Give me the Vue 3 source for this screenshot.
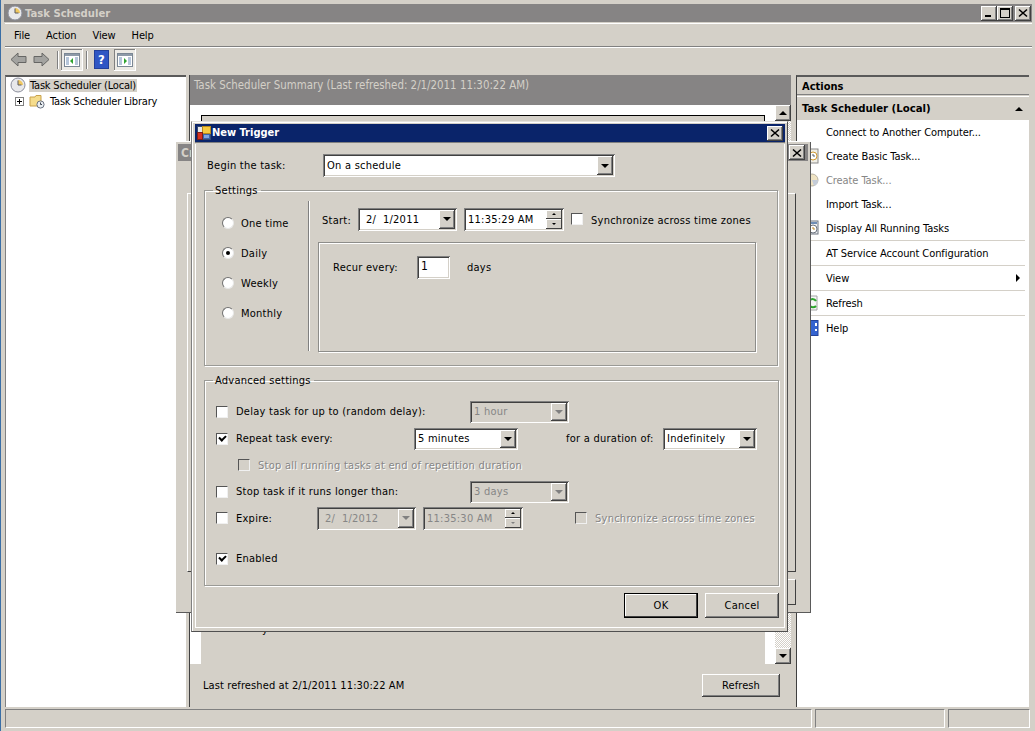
<template>
  <div class="desktop">
    <!-- main mmc window -->
    <div class="main-win">
      <div class="title-bar inactive">
        <svg class="ico16" viewBox="0 0 16 16">
          <circle cx="8" cy="8" r="7" fill="#e8e8ea" stroke="#8c8f9c" />
          <path d="M8 8V3A5 5 0 0 1 13 8Z" fill="#f0c860" />
          <path d="M8 3.5V8H11.5" fill="none" stroke="#5a5a60" stroke-width="1" />
        </svg>
        <span class="title-text">Task Scheduler</span>
        <div class="win-btns">
          <button class="cap-btn"><span class="min-glyph"></span></button>
          <button class="cap-btn"><span class="max-glyph"></span></button>
          <button class="cap-btn x-btn">
            <svg viewBox="0 0 10 10" width="10" height="10"><path d="M1 1.5L9 8.5M9 1.5L1 8.5" stroke="#000" stroke-width="1.6" /></svg>
          </button>
        </div>
      </div>

      <div class="menu-bar">
        <span v-for="m in menus" :key="m" class="menu-item">{{ m }}</span>
      </div>

      <div class="tool-bar">
        <svg class="tool-arrow" viewBox="0 0 17 15" width="17" height="15"><path d="M1 7.5L8 1V4.5H16V10.5H8V14Z" fill="#a3a3a0" stroke="#666664" /></svg>
        <svg class="tool-arrow second" viewBox="0 0 17 15" width="17" height="15"><path d="M16 7.5L9 1V4.5H1V10.5H9V14Z" fill="#a3a3a0" stroke="#666664" /></svg>
        <span class="tool-sep"></span>
        <span class="tool-toggle">
          <svg viewBox="0 0 16 14" width="16" height="14">
            <rect x="0.5" y="0.5" width="15" height="13" fill="#fff" stroke="#7b8794" />
            <rect x="1" y="1" width="14" height="2" fill="#8e9aa8" />
            <path d="M2 5H5M2 7H5M2 9H5M2 11H5M11 5H14M11 7H14M11 9H14M11 11H14" stroke="#6f8db5" />
            <path d="M9 5L6 8L9 11Z" fill="#2fa32f" />
          </svg>
        </span>
        <span class="tool-sep small"></span>
        <span class="help-ico">?</span>
        <span class="tool-toggle near">
          <svg viewBox="0 0 16 14" width="16" height="14">
            <rect x="0.5" y="0.5" width="15" height="13" fill="#fff" stroke="#7b8794" />
            <rect x="1" y="1" width="14" height="2" fill="#8e9aa8" />
            <path d="M2 5H5M2 7H5M2 9H5M2 11H5M11 5H14M11 7H14M11 9H14M11 11H14" stroke="#6f8db5" />
            <path d="M7 5L10 8L7 11Z" fill="#2fa32f" />
          </svg>
        </span>
      </div>

      <div class="panes">
        <div class="tree-pane">
          <div class="tree-row">
            <svg class="ico16" viewBox="0 0 16 16">
              <circle cx="8" cy="8" r="7" fill="#e8e8ea" stroke="#8c8f9c" />
              <path d="M8 8V3A5 5 0 0 1 13 8Z" fill="#f0c860" />
              <path d="M8 3.5V8H11.5" fill="none" stroke="#5a5a60" />
            </svg>
            <span class="tree-sel">Task Scheduler (Local)</span>
          </div>
          <div class="tree-row child">
            <span class="plus-box"></span>
            <svg class="ico16 folder" viewBox="0 0 16 16">
              <path d="M1 4H6L7 2.5H12V13H1Z" fill="#f5dc8c" stroke="#c9a24c" />
              <circle cx="11.5" cy="11.5" r="3.6" fill="#e9eef2" stroke="#6b7280" />
              <path d="M11.5 9.5V11.5H13" fill="none" stroke="#3d4450" />
            </svg>
            <span>Task Scheduler Library</span>
          </div>
        </div>

        <div class="center-pane">
          <div class="summary-head">Task Scheduler Summary (Last refreshed: 2/1/2011 11:30:22 AM)</div>
          <div class="summary-body">
            <div class="summary-box">
              <div class="summary-inner"></div>
              <!-- descender of a line hidden under the dialog -->
              <span class="stray">y</span>
            </div>
            <div class="scroll-col">
              <button class="scroll-btn"><span class="tri up"></span></button>
              <div class="scroll-track"></div>
              <button class="scroll-btn"><span class="tri"></span></button>
            </div>
          </div>
          <div class="summary-foot">
            <span>Last refreshed at 2/1/2011 11:30:22 AM</span>
            <button class="btn refresh">Refresh</button>
          </div>
        </div>

        <div class="actions-pane">
          <div class="actions-head">Actions</div>
          <div class="actions-sub">
            <span>Task Scheduler (Local)</span>
            <span class="tri up"></span>
          </div>
          <div class="actions-list">
            <div v-for="a in actions" :key="a.label" class="action" :class="{ ruled: a.ruled, off: a.off }" :style="{ height: a.h + 'px' }">
              <svg v-if="a.icon === 'task'" class="act-ico" viewBox="0 0 16 16">
                <rect x="4" y="1" width="11" height="14" fill="#f1efe6" stroke="#8a8a8a" />
                <circle cx="10" cy="8" r="4" fill="#fff" stroke="#d19b35" />
                <path d="M10 6V8H12" fill="none" stroke="#55606e" />
              </svg>
              <svg v-if="a.icon === 'taskoff'" class="act-ico" viewBox="0 0 16 16">
                <circle cx="9" cy="8" r="6" fill="#efe3c3" stroke="#b9b2a3" />
                <path d="M9 8L15 8A6 6 0 0 1 11 14Z" fill="#c4ccd8" />
              </svg>
              <svg v-if="a.icon === 'list'" class="act-ico" viewBox="0 0 16 16">
                <rect x="4" y="1" width="11" height="13" fill="#eef0f2" stroke="#6c7480" />
                <path d="M5 3H14" stroke="#6f8db5" stroke-width="2" />
                <circle cx="10" cy="9" r="4" fill="#fff" stroke="#6c7480" />
                <path d="M10 7V9H12" fill="none" stroke="#c08a2a" />
              </svg>
              <svg v-if="a.icon === 'refresh'" class="act-ico" viewBox="0 0 16 16">
                <path d="M4 1H14V15H4Z" fill="#f6f6f6" stroke="#a4a4a4" />
                <path d="M13 6A4 4 0 0 0 6 6M7 11A4 4 0 0 0 13 11" fill="none" stroke="#2da52d" stroke-width="2" />
              </svg>
              <svg v-if="a.icon === 'help'" class="act-ico" viewBox="0 0 16 16">
                <rect x="4" y="0.5" width="11" height="15" fill="#3563cf" stroke="#24439a" />
                <path d="M12 3H14V6H12ZM12 9H14V11H12Z" fill="#fff" />
              </svg>
              <span class="action-label">{{ a.label }}</span>
              <span v-if="a.more" class="more"></span>
            </div>
          </div>
        </div>
      </div>

      <div class="status-bar">
        <span class="st wide"></span>
        <span class="st mid"></span>
        <span class="st end"></span>
      </div>
    </div>

    <!-- dialog behind the trigger dialog -->
    <div class="back-dlg">
      <div class="back-title">
        <span class="back-cap">Create Trigger</span>
        <button class="cap-btn dlg-x">
          <svg viewBox="0 0 10 10" width="10" height="10"><path d="M1 1.5L9 8.5M9 1.5L1 8.5" stroke="#000" stroke-width="1.6" /></svg>
        </button>
      </div>
      <div class="back-group"></div>
      <div class="back-strip"></div>
    </div>

    <!-- New Trigger dialog -->
    <div class="dlg">
      <div class="dlg-title">
        <svg class="dlg-ico" viewBox="0 0 14 14">
          <rect x="0.5" y="0.5" width="13" height="13" fill="#e8e8e8" stroke="#34496f" />
          <rect x="5.5" y="0.5" width="8" height="7" fill="#f6c93e" stroke="#b88a1c" />
          <rect x="0.5" y="6.5" width="5" height="7" fill="#d8301f" stroke="#7d1e16" />
          <rect x="6.5" y="8.5" width="6" height="4" fill="#7ea6e0" stroke="#3d63a8" />
        </svg>
        <span class="dlg-name">New Trigger</span>
        <button class="cap-btn dlg-x">
          <svg viewBox="0 0 10 10" width="10" height="10"><path d="M1 1.5L9 8.5M9 1.5L1 8.5" stroke="#000" stroke-width="1.6" /></svg>
        </button>
      </div>

      <div class="dlg-body">
        <div class="begin-row">
          <span class="begin-label">Begin the task:</span>
          <div class="combo begin-combo">
            <span class="combo-val">On a schedule</span>
            <span class="drop"><span class="tri"></span></span>
          </div>
        </div>

        <fieldset class="group settings">
          <legend>Settings</legend>
          <div class="settings-in">
            <div class="radios">
              <label v-for="r in schedules" :key="r" class="radio-row">
                <span class="radio" :class="{ on: r === 'Daily' }"></span>
                <span>{{ r }}</span>
              </label>
            </div>
            <div class="schedule">
              <div class="start-row">
                <span class="start-label">Start:</span>
                <div class="combo date">
                  <span class="combo-val wide-date">2/&nbsp;&nbsp;1/2011</span>
                  <span class="drop"><span class="tri"></span></span>
                </div>
                <div class="combo time">
                  <span class="combo-val">11:35:29 AM</span>
                  <span class="spin"><i><b class="tri tiny up"></b></i><i><b class="tri tiny"></b></i></span>
                </div>
                <span class="check sync-check"></span>
                <span class="sync-label">Synchronize across time zones</span>
              </div>
              <div class="recur-box">
                <span class="recur-label">Recur every:</span>
                <span class="recur-input">1</span>
                <span class="recur-unit">days</span>
              </div>
            </div>
          </div>
        </fieldset>

        <fieldset class="group advanced">
          <legend>Advanced settings</legend>
          <div class="adv-row">
            <span class="check"></span>
            <span class="adv-label l-delay">Delay task for up to (random delay):</span>
            <div class="combo off c-long">
              <span class="combo-val">1 hour</span>
              <span class="drop"><span class="tri"></span></span>
            </div>
          </div>
          <div class="adv-row">
            <span class="check on"></span>
            <span class="adv-label l-repeat">Repeat task every:</span>
            <div class="combo c-repeat">
              <span class="combo-val">5 minutes</span>
              <span class="drop"><span class="tri"></span></span>
            </div>
            <span class="dur-label">for a duration of:</span>
            <div class="combo c-dur">
              <span class="combo-val">Indefinitely</span>
              <span class="drop"><span class="tri"></span></span>
            </div>
          </div>
          <div class="adv-row short indent">
            <span class="check dim"></span>
            <span class="adv-label gray">Stop all running tasks at end of repetition duration</span>
          </div>
          <div class="adv-row">
            <span class="check"></span>
            <span class="adv-label l-delay">Stop task if it runs longer than:</span>
            <div class="combo off c-long">
              <span class="combo-val">3 days</span>
              <span class="drop"><span class="tri"></span></span>
            </div>
          </div>
          <div class="adv-row short">
            <span class="check"></span>
            <span class="adv-label l-expire">Expire:</span>
            <div class="combo off date">
              <span class="combo-val wide-date">2/&nbsp;&nbsp;1/2012</span>
              <span class="drop"><span class="tri"></span></span>
            </div>
            <div class="combo off time">
              <span class="combo-val">11:35:30 AM</span>
              <span class="spin"><i><b class="tri tiny up"></b></i><i><b class="tri tiny"></b></i></span>
            </div>
            <span class="check dim exp-sync"></span>
            <span class="gray">Synchronize across time zones</span>
          </div>
          <div class="adv-row enabled">
            <span class="check on"></span>
            <span class="adv-label">Enabled</span>
          </div>
        </fieldset>

        <div class="dlg-foot">
          <button class="btn ok">OK</button>
          <button class="btn cancel">Cancel</button>
        </div>
      </div>
    </div>
  </div>
</template>

<script setup>
const menus = ['File', 'Action', 'View', 'Help']
const schedules = ['One time', 'Daily', 'Weekly', 'Monthly']

// rows of the Actions pane, heights read from the screenshot
const actions = [
  { label: 'Connect to Another Computer...', h: 24 },
  { label: 'Create Basic Task...', h: 24, icon: 'task' },
  { label: 'Create Task...', h: 24, icon: 'taskoff', off: true },
  { label: 'Import Task...', h: 24 },
  { label: 'Display All Running Tasks', h: 25, icon: 'list', ruled: true },
  { label: 'AT Service Account Configuration', h: 25, ruled: true },
  { label: 'View', h: 25, ruled: true, more: true },
  { label: 'Refresh', h: 25, icon: 'refresh', ruled: true },
  { label: 'Help', h: 25, icon: 'help' }
]
</script>

<style>
html, body {
  margin: 0;
  background: #d4d0c8;
}
</style>

<style scoped>
.desktop {
  position: relative;
  width: 1035px;
  height: 731px;
  overflow: hidden;
  background: #d4d0c8;
  font-family: "DejaVu Sans Condensed", "DejaVu Sans", sans-serif;
  font-stretch: condensed;
  font-size: 11px;
  color: #000;
}

/* main window */
.main-win {
  display: flex;
  flex-direction: column;
  height: 731px;
  box-sizing: border-box;
  padding: 4px 3px 2px 4px;
  border-left: 1px solid #3a6ea5;
}
.title-bar {
  display: flex;
  align-items: center;
  flex: none;
  height: 18px;
  margin-left: -1px;
  padding-left: 3px;
  background: #868484;
  color: #d4d0c8;
  font-size: 11.2px;
  font-weight: bold;
}
.title-text {
  margin-left: 2px;
}
.ico16 {
  width: 16px;
  height: 16px;
  flex: none;
}
.win-btns {
  display: flex;
  margin-left: auto;
  margin-right: 1px;
}
.cap-btn {
  display: flex;
  align-items: center;
  justify-content: center;
  width: 16px;
  height: 15px;
  padding: 0;
  border: 0;
  margin-left: 0;
  background: #d4d0c8;
  box-shadow: inset -1px -1px #404040, inset 1px 1px #fff, inset -2px -2px #808080;
}
.x-btn {
  margin-left: 2px;
}
.min-glyph {
  width: 6px;
  height: 2px;
  background: #000;
  margin-top: 6px;
  margin-right: 3px;
}
.max-glyph {
  width: 8px;
  height: 7px;
  border: 1px solid #000;
  border-top-width: 2px;
}
.menu-bar {
  display: flex;
  flex: none;
  align-items: center;
  height: 24px;
  margin-top: 1px;
  padding-left: 9px;
  gap: 16px;
  letter-spacing: -0.1px;
  border-top: 1px solid #fff;
  border-bottom: 1px solid #808080;
  box-sizing: border-box;
}
.tool-bar {
  display: flex;
  flex: none;
  align-items: center;
  height: 24px;
  padding-left: 5px;
  border-top: 1px solid #fff;
  box-sizing: border-box;
}
.tool-arrow.second {
  margin-left: 6px;
}
.tool-sep {
  width: 1px;
  height: 18px;
  margin: 0 3px 0 7px;
  background: #808080;
  box-shadow: 1px 0 #fff;
}
.tool-sep.small {
  margin: 0 8px 0 3px;
}
.tool-toggle {
  display: flex;
  align-items: center;
  justify-content: center;
  width: 22px;
  height: 22px;
  background: #eceae5;
  box-shadow: inset -1px -1px #fff, inset 1px 1px #808080;
}
.tool-toggle.near {
  margin-left: 6px;
}
.help-ico {
  width: 13px;
  height: 17px;
  background: #2f56c4;
  color: #fff;
  font-weight: bold;
  font-size: 13px;
  line-height: 17px;
  text-align: center;
  box-shadow: 0 0 0 1px #23409a;
}

.panes {
  display: flex;
  flex: 1;
  min-height: 0;
  margin-top: 4px;
  background: #d4d0c8;
}
.tree-pane {
  width: 181px;
  flex: none;
  box-sizing: border-box;
  padding: 0 0 0 4px;
  background: #fff;
  border-top: 2px solid #5a5a5a;
  border-left: 1px solid #808080;
  letter-spacing: -0.2px;
}
.tree-row {
  display: flex;
  align-items: center;
  height: 16px;
}
.tree-sel {
  margin-left: 3px;
  padding: 0 1px;
  background: #d4d0c8;
}
.tree-row.child {
  margin-left: 5px;
}
.plus-box {
  position: relative;
  box-sizing: border-box;
  width: 9px;
  height: 9px;
  border: 1px solid #808080;
  margin-right: 5px;
}
.plus-box::before {
  content: "";
  position: absolute;
  left: 1px;
  top: 3px;
  width: 5px;
  height: 1px;
  background: #000;
}
.plus-box::after {
  content: "";
  position: absolute;
  left: 3px;
  top: 1px;
  width: 1px;
  height: 5px;
  background: #000;
}
.folder {
  margin-right: 5px;
}
.center-pane {
  display: flex;
  flex-direction: column;
  width: 602px;
  flex: none;
  margin-left: 3px;
  border-left: 1px solid #404040;
  box-sizing: border-box;
}
.summary-head {
  flex: none;
  box-sizing: border-box;
  height: 30px;
  padding: 3px 0 0 4px;
  background: #868484;
  color: #d4d0c8;
  font-size: 11.4px;
}
.summary-body {
  display: flex;
  height: 559px;
  flex: none;
  background: #fff;
  box-sizing: border-box;
  padding: 10px 0 0 11px;
}
.summary-box {
  position: relative;
  flex: 1;
  margin-right: 10px;
  background: #d4d0c8;
}
.summary-inner {
  box-sizing: border-box;
  height: 60px;
  border: 1px solid #000;
  border-bottom: 0;
}
.stray {
  position: absolute;
  left: 61px;
  top: 508px;
}
.scroll-col {
  display: flex;
  flex-direction: column;
  width: 16px;
  flex: none;
  margin-top: -10px;
}
.scroll-btn {
  display: flex;
  align-items: center;
  justify-content: center;
  width: 16px;
  height: 16px;
  padding: 0;
  border: 0;
  background: #d4d0c8;
  box-shadow: inset -1px -1px #404040, inset 1px 1px #fff, inset -2px -2px #808080;
}
.scroll-track {
  flex: 1;
  background: repeating-conic-gradient(#d4d0c8 0 25%, #fff 0 50%) 0 0 / 2px 2px;
}
.summary-foot {
  display: flex;
  align-items: center;
  flex: 1;
  justify-content: space-between;
  padding: 0 11px 0 13px;
  letter-spacing: 0.1px;
}
.actions-pane {
  display: flex;
  flex-direction: column;
  width: 233px;
  flex: none;
  margin-left: 5px;
  border-left: 1px solid #404040;
  border-top: 2px solid #5a5a5a;
  box-sizing: border-box;
}
.actions-head {
  flex: none;
  box-sizing: border-box;
  height: 18px;
  padding: 3px 0 0 5px;
  font-weight: bold;
  border-bottom: 1px solid #808080;
  margin-bottom: 1px;
}
.actions-sub {
  display: flex;
  align-items: center;
  justify-content: space-between;
  flex: none;
  height: 24px;
  padding: 0 6px 0 5px;
  font-size: 11.3px;
  font-weight: bold;
  background: #d4d0c8;
  border-top: 1px solid #fff;
  box-sizing: border-box;
}
.actions-list {
  flex: 1;
  background: #fff;
  padding-right: 4px;
  letter-spacing: -0.08px;
}
.action {
  position: relative;
  display: flex;
  align-items: center;
  box-sizing: border-box;
  padding-left: 29px;
}
.action.ruled {
  border-bottom: 1px solid #d4d0c8;
}
.action.off {
  color: #868686;
}
.act-ico {
  position: absolute;
  left: 6px;
  top: 4px;
  width: 16px;
  height: 16px;
}
.more {
  position: absolute;
  right: 5px;
  top: 8px;
  border-left: 4px solid #000;
  border-top: 4px solid transparent;
  border-bottom: 4px solid transparent;
}
.status-bar {
  display: flex;
  flex: none;
  height: 20px;
  margin-top: 2px;
  gap: 3px;
  box-sizing: border-box;
}
.st {
  display: block;
  height: 19px;
  box-sizing: border-box;
  border: 1px solid;
  border-color: #808080 #fff #fff #808080;
}
.st.wide { width: 807px; }
.st.mid { width: 130px; }
.st.end { width: 82px; }

/* triangles */
.tri {
  display: block;
  width: 0;
  height: 0;
  border-left: 4px solid transparent;
  border-right: 4px solid transparent;
  border-top: 4px solid #000;
}
.tri.up {
  border-top: 0;
  border-bottom: 4px solid #000;
}
.tri.tiny {
  border-left-width: 2px;
  border-right-width: 2px;
  border-top-width: 2px;
}
.tri.tiny.up {
  border-top-width: 0;
  border-bottom-width: 2px;
}

/* windows on top of the console */
.back-dlg {
  position: absolute;
  left: 175px;
  top: 141px;
  width: 636px;
  height: 472px;
  box-sizing: border-box;
  padding: 3px;
  background: #d4d0c8;
  box-shadow: inset 1px 1px #fff, inset -1px -1px #5a5a5a;
}
.back-title {
  display: flex;
  align-items: center;
  justify-content: space-between;
  height: 17px;
  background: #868484;
  color: #d4d0c8;
  font-weight: bold;
  padding-left: 3px;
  padding-right: 3px;
  font-size: 12px;
}
.back-group {
  height: 377px;
  margin: 32px 12px 0 9px;
  border: 1px solid;
  border-color: #fff #404040 #404040 #fff;
}
.back-strip {
  height: 24px;
  margin: 7px 12px 0 560px;
  border: 1px solid;
  border-color: #fff #404040 #404040 #fff;
}
.dlg {
  position: absolute;
  left: 191px;
  top: 121px;
  width: 597px;
  height: 511px;
  box-sizing: border-box;
  padding: 2px 2px 3px 3px;
  background: #d4d0c8;
  border: 1px solid;
  border-color: #e6e4de #505050 #505050 #808080;
  box-shadow: inset 1px 1px #fff, inset -1px -1px #d4d0c8;
  display: flex;
  flex-direction: column;
}
.dlg-title {
  display: flex;
  align-items: center;
  flex: none;
  height: 18px;
  padding: 0 2px 0 2px;
  background: #0a246a;
  color: #fff;
  font-size: 11px;
  font-weight: bold;
  border-bottom: 1px solid #808080;
  margin-bottom: 1px;
}
.dlg-name {
  margin-top: -2px;
}
.dlg-ico {
  width: 14px;
  height: 14px;
  margin-right: 1px;
}
.dlg-x {
  margin-left: auto;
  background: #d4d0c8;
}
.dlg-body {
  flex: 1;
  box-sizing: border-box;
  padding: 10px 5px 0 8px;
  border-left: 1px solid #fff;
  border-right: 1px solid #fff;
  border-bottom: 1px solid #fff;
  min-height: 0;
  letter-spacing: 0.25px;
}
.begin-row {
  display: flex;
  align-items: center;
  height: 23px;
  margin-bottom: 7px;
}
.begin-label {
  width: 119px;
  padding-left: 3px;
  box-sizing: border-box;
}
.combo {
  display: flex;
  align-items: stretch;
  flex: none;
  box-sizing: border-box;
  height: 22px;
  padding: 2px;
  background: #fff;
  box-shadow: inset 1px 1px #808080, inset -1px -1px #fff, inset 2px 2px #404040, inset -2px -2px #d4d0c8;
}
.combo-val {
  flex: 1;
  padding: 2px 0 0 2px;
  line-height: 13px;
  white-space: nowrap;
  overflow: hidden;
}
.date .combo-val,
.time .combo-val {
  padding-top: 3px;
}
.wide-date {
  padding-left: 6px;
}
.drop {
  display: flex;
  align-items: center;
  justify-content: center;
  flex: none;
  width: 16px;
  background: #d4d0c8;
  box-shadow: inset -1px -1px #404040, inset 1px 1px #fff, inset -2px -2px #808080;
}
.begin-combo {
  width: 292px;
  height: 23px;
}
.begin-combo .combo-val {
  padding-top: 3px;
}
.combo.off {
  background: #d4d0c8;
  color: #868686;
}
.combo.off .tri {
  border-top-color: #808080;
}
.group {
  margin: 0;
  padding: 0;
  border: 1px solid #9a9a96;
  box-shadow: 1px 1px #fff, inset 1px 1px #fff;
  min-width: 0;
}
.group legend {
  margin-left: 8px;
  padding: 0 3px 0 2px;
  line-height: 13px;
}
.settings {
  height: 182px;
  box-sizing: border-box;
  width: 574px;
}
.settings-in {
  display: flex;
  height: 150px;
  margin-top: 4px;
}
.radios {
  width: 104px;
  flex: none;
  box-sizing: border-box;
  height: 150px;
  padding: 7px 0 0 17px;
  border-right: 1px solid #808080;
  box-shadow: 1px 0 #fff;
}
.radio-row {
  display: flex;
  align-items: center;
  height: 30px;
}
.radio {
  position: relative;
  box-sizing: border-box;
  width: 12px;
  height: 12px;
  margin-right: 7px;
  border-radius: 50%;
  background: #fff;
  border: 1px solid;
  border-color: #707070 #e8e8e8 #e8e8e8 #707070;
}
.radio.on::after {
  content: "";
  position: absolute;
  left: 3px;
  top: 3px;
  width: 4px;
  height: 4px;
  border-radius: 50%;
  background: #000;
}
.schedule {
  flex: 1;
  padding: 6px 0 0 9px;
}
.start-row {
  display: flex;
  align-items: center;
  height: 24px;
  padding-left: 4px;
}
.start-label {
  width: 36px;
  padding-top: 2px;
}
.sync-label {
  padding-top: 2px;
}
.date {
  width: 99px;
  height: 23px;
}
.time {
  width: 100px;
  height: 23px;
  margin-left: 7px;
}
.spin {
  display: flex;
  flex-direction: column;
  flex: none;
  width: 16px;
}
.spin i {
  display: flex;
  align-items: center;
  justify-content: center;
  flex: 1;
  background: #d4d0c8;
  box-shadow: inset -1px -1px #404040, inset 1px 1px #fff;
}
.check {
  position: relative;
  display: block;
  box-sizing: border-box;
  flex: none;
  width: 12px;
  height: 12px;
  background: #fff;
  border: 1px solid;
  border-color: #555 #f0f0f0 #f0f0f0 #555;
}
.check.dim {
  background: #d4d0c8;
}
.check.on::after {
  content: "";
  position: absolute;
  left: 2px;
  top: 1px;
  width: 5px;
  height: 3px;
  border-left: 2px solid #000;
  border-bottom: 2px solid #000;
  transform: rotate(-45deg);
}
.sync-check {
  margin: 0 8px 0 7px;
}
.recur-box {
  display: flex;
  align-items: center;
  box-sizing: border-box;
  width: 438px;
  height: 110px;
  margin-top: 11px;
  padding: 0 0 60px 14px;
  border: 1px solid #8d8d8a;
  box-shadow: inset 1px 1px #fff, 1px 1px #fff;
}
.recur-label {
  width: 84px;
}
.recur-input {
  box-sizing: border-box;
  width: 33px;
  height: 23px;
  padding: 3px 0 0 4px;
  background: #fff;
  font-size: 12px;
  line-height: 14px;
  box-shadow: inset 1px 1px #808080, inset -1px -1px #fff, inset 2px 2px #404040, inset -2px -2px #d4d0c8;
}
.recur-unit {
  margin-left: 17px;
}
.advanced {
  height: 212px;
  box-sizing: border-box;
  width: 575px;
  margin-top: 8px;
  padding: 11px 0 0 11px;
}
.advanced legend {
  margin-left: -3px;
}
.adv-row {
  display: flex;
  align-items: center;
  height: 27px;
}
.adv-row.short {
  height: 26px;
}
.adv-row.indent {
  padding-left: 22px;
}
.adv-row.enabled {
  margin-top: 14px;
}
.adv-label {
  margin-left: 8px;
}
.l-delay {
  width: 234px;
}
.l-repeat {
  width: 178px;
}
.l-expire {
  width: 81px;
}
.gray {
  color: #868686;
  text-shadow: 1px 1px #fff;
}
.c-long {
  width: 99px;
}
.c-repeat {
  width: 104px;
}
.dur-label {
  margin-left: 48px;
  width: 97px;
}
.c-dur {
  width: 94px;
}
.exp-sync {
  margin: 0 8px 0 52px;
}
.dlg-foot {
  display: flex;
  justify-content: flex-end;
  gap: 7px;
  margin-top: 7px;
  padding-right: 0;
}
.btn {
  box-sizing: border-box;
  padding: 0;
  border: 0;
  background: #d4d0c8;
  font: inherit;
  letter-spacing: inherit;
  color: #000;
  box-shadow: inset -1px -1px #404040, inset 1px 1px #fff, inset -2px -2px #808080;
}
.ok, .cancel {
  width: 74px;
  height: 25px;
}
.ok {
  box-shadow: inset 0 0 0 1px #000, inset -2px -2px #404040, inset 2px 2px #fff;
}
.refresh {
  width: 78px;
  height: 23px;
}
</style>
